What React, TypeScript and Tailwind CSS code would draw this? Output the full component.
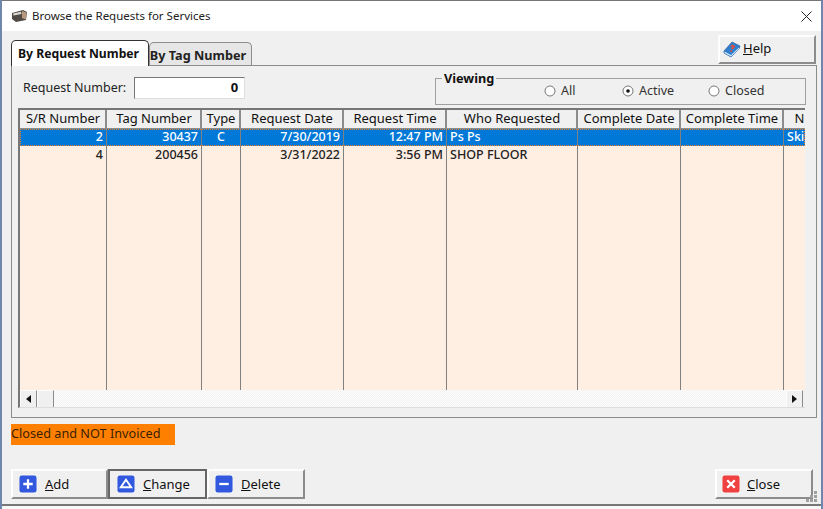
import React from 'react';

const columns = [
  { label: 'S/R Number', width: 87 },
  { label: 'Tag Number', width: 95 },
  { label: 'Type', width: 39 },
  { label: 'Request Date', width: 103 },
  { label: 'Request Time', width: 103 },
  { label: 'Who Requested', width: 131 },
  { label: 'Complete Date', width: 103 },
  { label: 'Complete Time', width: 103 },
  { label: 'Note', width: 52 },
];

const rows = [
  ['2', '30437', 'C', '7/30/2019', '12:47 PM', 'Ps Ps', '', '', 'Skip'],
  ['4', '200456', '', '3/31/2022', '3:56 PM', 'SHOP FLOOR', '', '', ''],
];

const alignments = [
  'justify-end',
  'justify-end',
  'justify-center',
  'justify-end',
  'justify-end',
  'justify-start',
  'justify-start',
  'justify-start',
  'justify-start',
];

const raised = 'border-t-2 border-l-2 border-r-2 border-b-2 border-t-[#fdfdfd] border-l-[#fdfdfd] border-r-[#8c8c8c] border-b-[#8c8c8c]';
const raisedThin = 'border border-t-[#fdfdfd] border-l-[#fdfdfd] border-r-[#8c8c8c] border-b-[#8c8c8c]';

function SquareIcon({ color, children }: { color: string; children: React.ReactNode }) {
  return (
    <svg width="18" height="18" viewBox="0 0 19 19" className="shrink-0">
      <rect x="0.5" y="0.5" width="18" height="18" rx="2.5" fill={color} />
      {children}
    </svg>
  );
}

function ActionButton({
  icon,
  hotkey,
  rest,
  className,
  labelClass = 'ml-[8px]',
}: {
  icon: React.ReactNode;
  hotkey: string;
  rest: string;
  className: string;
  labelClass?: string;
}) {
  return (
    <button className={`h-[30px] flex items-center bg-[#f0f0f0] text-[13px] text-[#111] ${className}`}>
      {icon}
      <span className={`pt-[2px] ${labelClass}`}>
        <span className="underline">{hotkey}</span>
        {rest}
      </span>
    </button>
  );
}

function Radio({ label, checked, className }: { label: string; checked?: boolean; className: string }) {
  return (
    <span className={`flex items-center ${className}`}>
      <svg width="12" height="12" viewBox="0 0 12 12" className="shrink-0">
        <circle cx="6" cy="6" r="5" fill="#fff" stroke="#777" />
        {checked && <circle cx="6" cy="6" r="1.8" fill="#111" />}
      </svg>
      <span className="ml-[5px] text-[12.5px] text-[#333]">{label}</span>
    </span>
  );
}

export default function App() {
  return (
    <div className="w-[823px] h-[509px] relative overflow-hidden bg-[#f8f8f8] font-['Noto_Sans',sans-serif] border-l-2 border-l-[#6f86ad] border-r-2 border-r-[#6f86ad]">
      <div className="h-[506px] flex flex-col bg-[#f0f0f0] border-t border-t-[#777] border-b-2 border-b-[#777]">
        <div className="h-[30px] shrink-0 bg-white flex items-center pl-[9px] pr-[9px]">
          <svg width="17" height="14" viewBox="0 0 17 14" className="shrink-0">
            <path d="M1 4 L12 1 L16 3 L15 11 L5 13 L1 10 Z" fill="#4f4a46" />
            <path d="M11 2 L15.5 3.5 L14.8 10.5 L11 9 Z" fill="#b8987e" />
            <path d="M2 4.5 L10 2.8 L10.5 5 L2.5 6.5 Z" fill="#dad6d2" />
          </svg>
          <span className="ml-[4px] text-[11.5px] text-[#222]">Browse the Requests for Services</span>
          <svg width="11" height="11" viewBox="0 0 11 11" className="ml-auto">
            <path d="M0.5 0.5 L10.5 10.5 M10.5 0.5 L0.5 10.5" stroke="#222" strokeWidth="1" fill="none" />
          </svg>
        </div>

        <div className="flex-1 flex flex-col pl-[9px] pr-[4px]">
          <div className="h-[34px] shrink-0 flex items-end relative z-10">
            <div className="w-[138px] h-[26px] -mb-px pr-[3px] pt-[2px] whitespace-nowrap bg-white border border-[#333] border-b-0 rounded-t-[5px] flex items-center justify-center text-[12.2px] font-bold text-[#111]">
              By Request Number
            </div>
            <div className="w-[103px] h-[23px] pt-[3px] pr-[5px] whitespace-nowrap bg-[#e6e6e6] border border-[#8c8c8c] border-b-0 rounded-t-[5px] flex items-center justify-center text-[12.7px] font-bold text-[#222]">
              By Tag Number
            </div>
            <button className={`ml-auto mr-[1px] mb-[1px] w-[98px] h-[29px] flex items-center pl-[3px] pb-[1px] bg-[#f0f0f0] text-[13px] text-[#111] ${raised}`}>
              <svg width="18" height="17" viewBox="0 0 18 17" className="shrink-0">
                <path d="M1 10 L9 1 L17 5 L16 8 L8 16 L1 12 Z" fill="#2f7fd0" stroke="#2a5f9e" strokeWidth="0.7" />
                <path d="M1.5 10.5 L8 14 L16 6.5 L16 8 L8 15.5 L1.5 12 Z" fill="#cfe3f6" />
                <path d="M7 6 L9 3.5 L12.5 5 L10 8.5 L8 7.5 L9.8 5.8 L8.5 5.2 L8 6.5 Z" fill="#e0503a" />
                <circle cx="8.2" cy="10" r="1" fill="#e0503a" />
              </svg>
              <span className="ml-[2px]">
                <span className="underline">H</span>elp
              </span>
            </button>
          </div>

          <div className="h-[353px] shrink-0 border border-[#8c8c8c] px-[6px] flex flex-col">
            <div className="h-[42px] shrink-0 flex">
              <div className="flex items-center h-[34px] mt-[5px] pl-[5px]">
                <span className="text-[12.5px] text-[#222]">Request Number:</span>
                <div className="ml-[8px] w-[111px] h-[22px] bg-white border-t border-l border-t-[#777] border-l-[#777] border-r border-b border-r-[#ddd] border-b-[#ddd] flex items-center justify-end pr-[6px] text-[13px] font-bold text-[#111]">
                  0
                </div>
              </div>
              <div className="ml-auto mr-[4px] mt-[12px] w-[371px] h-[27px] border border-[#a0a0a0] relative flex items-center pl-[108px] pb-[1px]">
                <span className="absolute left-[6px] -top-[8px] bg-[#f0f0f0] px-[2px] text-[12.7px] leading-[14px] font-bold text-[#111]">Viewing</span>
                <Radio label="All" className="w-[78px]" />
                <Radio label="Active" checked className="w-[86px]" />
                <Radio label="Closed" className="" />
              </div>
            </div>

            <div className="w-[787px] h-[300px] border-t-2 border-l-2 border-t-[#777] border-l-[#777] border-b border-b-[#ddd] flex flex-col overflow-hidden">
              <div className="flex h-[19px] shrink-0">
                {columns.map((c) => (
                  <div
                    key={c.label}
                    style={{ width: c.width }}
                    className="shrink-0 flex items-center justify-center overflow-hidden whitespace-nowrap pl-[1px] bg-[#f0f0f0] border-r-2 border-r-[#8c8c8c] border-b border-b-[#8c8c8c] text-[13px] text-[#111]"
                  >
                    {c.label}
                  </div>
                ))}
              </div>
              <div className="h-[261px] shrink-0 relative bg-[#ffeee2] flex flex-col">
                {rows.map((row, i) => (
                  <div key={row[0]} className={`flex shrink-0 ${i === 0 ? 'h-[17px] bg-[#0078d7] text-white outline-1 -outline-offset-1 outline-dotted outline-[#f08020]' : 'h-[19px] text-[#222]'}`}>
                    {row.map((cell, j) => (
                      <div
                        key={j}
                        style={{ width: columns[j].width }}
                        className={`shrink-0 flex items-center overflow-hidden whitespace-nowrap px-[3px] border-r border-r-[#808080] text-[12.5px] font-medium ${alignments[j]}`}
                      >
                        {cell}
                      </div>
                    ))}
                  </div>
                ))}
                <div className="flex-1 flex">
                  {columns.map((c) => (
                    <div key={c.label} style={{ width: c.width }} className="shrink-0 border-r border-r-[#808080]" />
                  ))}
                </div>
              </div>
              <div className="h-[18px] shrink-0 flex bg-[#f4f4f4]">
                <button className={`w-[17px] flex items-center justify-center bg-[#f0f0f0] ${raisedThin}`}>
                  <svg width="5" height="8" viewBox="0 0 5 8">
                    <path d="M5 0 L0 4 L5 8 Z" fill="#111" />
                  </svg>
                </button>
                <div className={`w-[17px] bg-[#f0f0f0] ${raisedThin}`} />
                <div className="flex-1 bg-[repeating-conic-gradient(#f0f0f0_0_25%,#fff_0_50%)] bg-[length:2px_2px]" />
                <button className={`w-[17px] flex items-center justify-center bg-[#f0f0f0] ${raisedThin}`}>
                  <svg width="5" height="8" viewBox="0 0 5 8">
                    <path d="M0 0 L5 4 L0 8 Z" fill="#111" />
                  </svg>
                </button>
                <div className="w-[2px] bg-[#f0f0f0]" />
              </div>
            </div>
          </div>

          <div className="mt-[6px] w-[164px] h-[21px] shrink-0 bg-[#ff8000] flex items-center pb-[1px] text-[12.7px] text-[#3a2000]">
            Closed and NOT Invoiced
          </div>

          <div className="mt-[24px] flex">
            <ActionButton
              className={`w-[97px] pl-[6px] ${raised}`}
              hotkey="A"
              rest="dd"
              icon={
                <SquareIcon color="#3358e0">
                  <path d="M9.5 4.5 V14.5 M4.5 9.5 H14.5" stroke="#fff" strokeWidth="2.4" />
                </SquareIcon>
              }
            />
            <ActionButton
              className="w-[99px] pl-[7px] border-2 border-[#666]"
              hotkey="C"
              rest="hange"
              icon={
                <SquareIcon color="#3358e0">
                  <path d="M9.5 5 L15 13 H4 Z" fill="none" stroke="#fff" strokeWidth="2" />
                </SquareIcon>
              }
            />
            <ActionButton
              className={`w-[98px] pl-[6px] ${raised}`}
              hotkey="D"
              rest="elete"
              icon={
                <SquareIcon color="#3358e0">
                  <path d="M4.5 9.5 H14.5" stroke="#fff" strokeWidth="2.4" />
                </SquareIcon>
              }
            />
            <ActionButton
              className={`ml-auto mr-[4px] w-[98px] pl-[5px] ${raised}`}
              hotkey="C"
              rest="lose"
              labelClass="ml-[7px]"
              icon={
                <SquareIcon color="#f04040">
                  <path d="M5.5 5.5 L13.5 13.5 M13.5 5.5 L5.5 13.5" stroke="#fff" strokeWidth="2.4" />
                </SquareIcon>
              }
            />
          </div>
        </div>
      </div>

      <svg width="12" height="12" viewBox="0 0 12 12" className="absolute right-[3px] bottom-[6px]">
        <path d="M8 0h3v3H8z M4 4h3v3H4z M8 4h3v3H8z M0 8h3v3H0z M4 8h3v3H4z M8 8h3v3H8z" fill="#a0a0a0" />
      </svg>
    </div>
  );
}
